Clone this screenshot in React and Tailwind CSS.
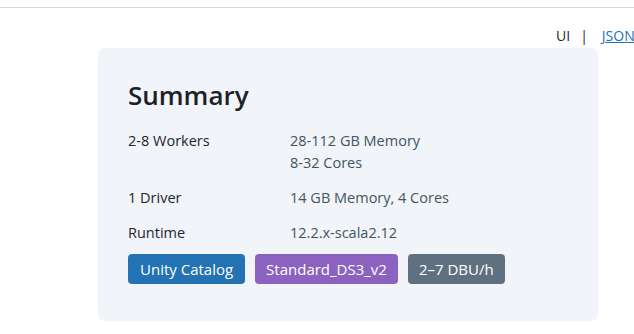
export default function App() {
  return (
    <div className="w-[634px] h-[334px] overflow-hidden bg-white text-[#1f272d]" style={{ fontFamily: '"Open Sans", "Noto Sans", sans-serif' }}>
      <div className="h-[8px] border-b border-[#d1d9e1]"></div>
      <div className="pl-[556px] pt-[18px] h-[40px] whitespace-nowrap text-[14px] leading-[20px] flex gap-[10px]">
        <span>UI</span>
        <span>|</span>
        <a href="#" className="text-[#2272b4] underline ml-[4px]">JSON</a>
      </div>
      <div className="ml-[98px] w-[500px] bg-[#f1f4f8] rounded-[6px] pt-[82px] pb-[37px] px-[30px] relative">
        <h2 className="absolute left-[30px] top-[30px] text-[26px] leading-[34px] font-semibold text-[#1c2127]">Summary</h2>
        <div className="grid grid-cols-[162px_1fr] gap-y-[13px] text-[14.5px] leading-[22px] text-[#1f272d]">
          <div>2-8 Workers</div>
          <div className="text-[#445461]">28-112 GB Memory<br />8-32 Cores</div>
          <div>1 Driver</div>
          <div className="text-[#445461]">14 GB Memory, 4 Cores</div>
          <div>Runtime</div>
          <div className="text-[#445461]">12.2.x-scala2.12</div>
        </div>
        <div className="flex gap-[10px] mt-[10px] text-[15px] text-white">
          <span className="h-[30px] px-[12px] rounded-[4px] bg-[#2272b4] flex items-center">Unity Catalog</span>
          <span className="h-[30px] px-[11px] rounded-[4px] bg-[#8b62bf] flex items-center">Standard_DS3_v2</span>
          <span className="h-[30px] px-[11px] rounded-[4px] bg-[#5f7180] flex items-center">2–7 DBU/h</span>
        </div>
      </div>
    </div>
  );
}
